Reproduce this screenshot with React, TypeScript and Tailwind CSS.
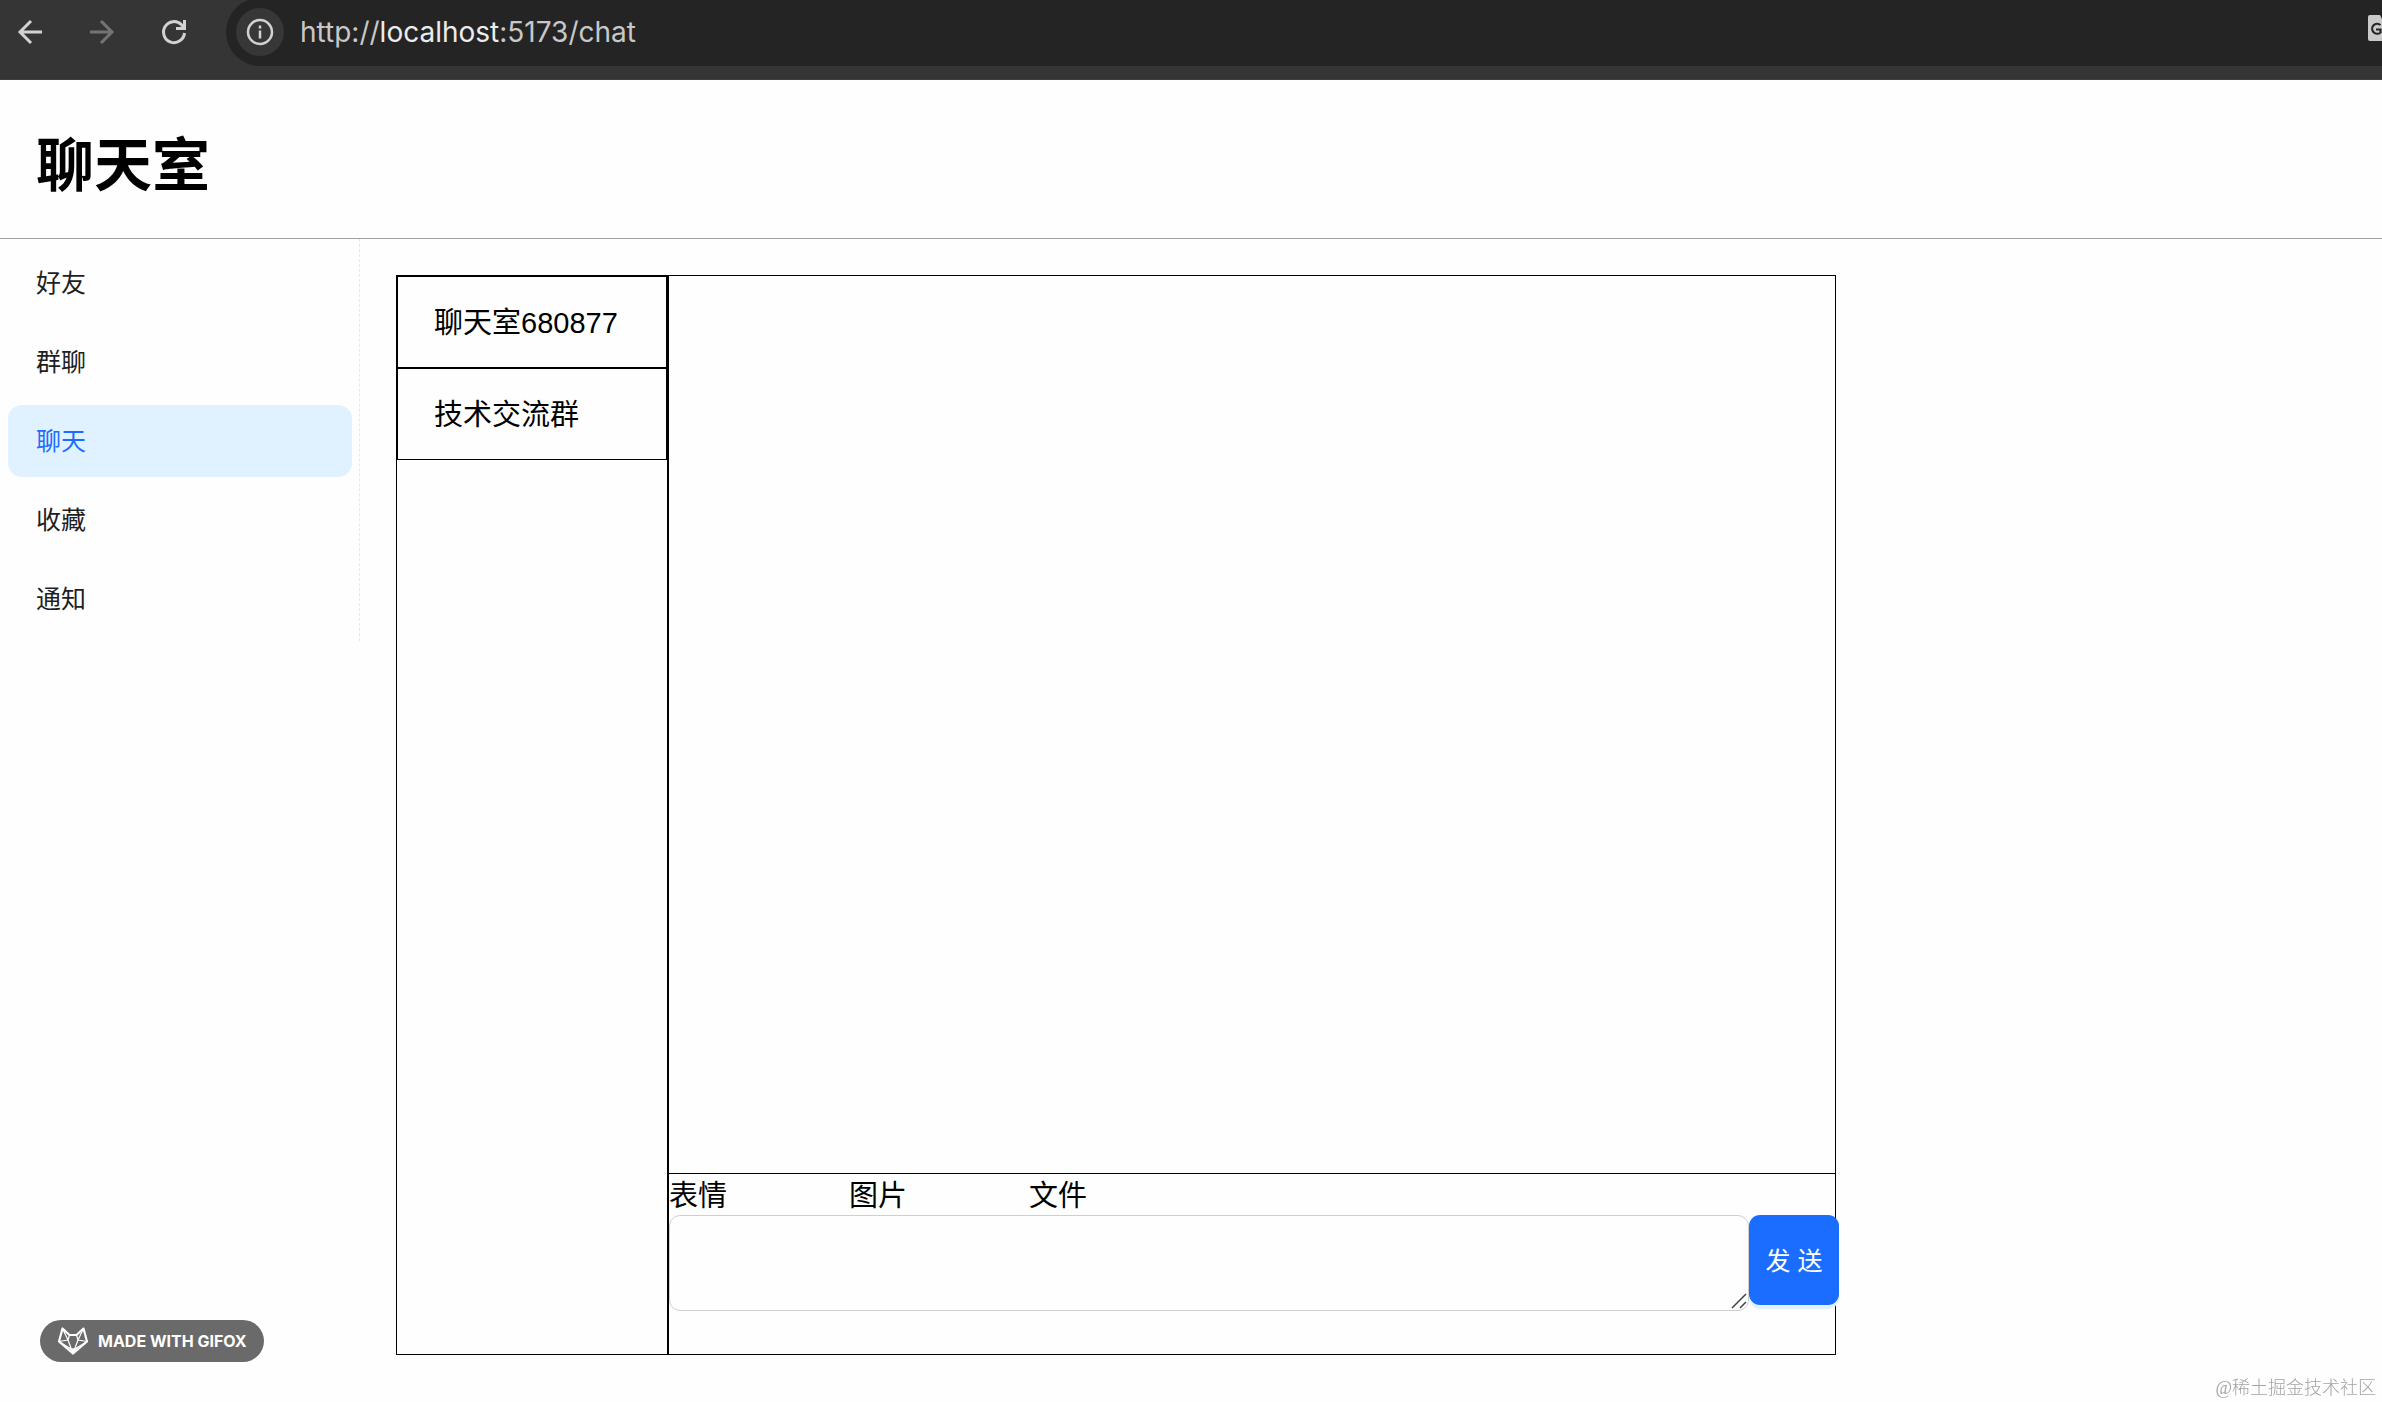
import React from "react";

const navItems = ["好友", "群聊", "聊天", "收藏", "通知"];
const rooms = ["聊天室680877", "技术交流群"];
const tools = ["表情", "图片", "文件"];

function BrowserBar() {
  return (
    <div className="flex h-20 items-start overflow-hidden border-b border-[#3f3f3f] bg-[#353535] text-[#d2d2d2]">
      <div className="flex h-16 w-[226px] shrink-0 items-center pl-4">
        <button aria-label="Back" className="w-7">
          <svg viewBox="0 0 28 28" className="size-7" fill="none" stroke="currentColor" strokeWidth="3">
            <path d="M26 14H4M15 3 4 14l11 11" />
          </svg>
        </button>
        <button aria-label="Forward" className="ml-11 w-7 text-[#747474]">
          <svg viewBox="0 0 28 28" className="size-7" fill="none" stroke="currentColor" strokeWidth="3">
            <path d="M2 14h22M13 3l11 11-11 11" />
          </svg>
        </button>
        <button aria-label="Reload" className="ml-11 w-7">
          <svg viewBox="0 0 28 28" className="size-7" fill="none" stroke="currentColor" strokeWidth="3">
            <path d="M24.500 15A10.500 10.500 0 1 1 21.500 6.700L24 9.500M24.500 2v8.500H16" />
          </svg>
        </button>
      </div>
      <div className="-mt-0.5 flex h-[68px] min-w-0 flex-1 items-center rounded-l-full bg-[#242424] pl-2.5">
        <button aria-label="Site information" className="flex size-12 shrink-0 items-center justify-center rounded-full bg-[#373737]">
          <svg viewBox="0 0 28 28" className="size-7" fill="none" stroke="currentColor" strokeWidth="2.500">
            <circle cx="14" cy="14" r="12" />
            <path d="M14 12.500v8M14 7.500v3" />
          </svg>
        </button>
        <div className="ml-4 min-w-0 flex-1 whitespace-nowrap font-['Inter',sans-serif] text-[28px] leading-10 text-[#c8c8c8]">
          http://<span className="text-[#ececec]">localhost</span>:5173/chat
        </div>
        <svg viewBox="0 0 14 28" className="mb-2 h-7 w-3.5 shrink-0" aria-hidden="true">
          <path d="M2 1h10l2 4v22H2q-2 0-2-2V3q0-2 2-2z" fill="#cacaca" />
          <path d="M12.500 11a5 5 0 1 0 0 7.500V15.500H8" fill="none" stroke="#242424" strokeWidth="2.200" />
        </svg>
      </div>
    </div>
  );
}

function Sidebar() {
  return (
    <nav className="flex w-[360px] shrink-0 flex-col gap-[7px] self-start border-r border-dashed border-[#dcebfa] pt-2 pr-[7px] pb-1.5 pl-2 text-[25px]">
      {navItems.map((item) => (
        <a
          key={item}
          href="#"
          aria-current={item === "聊天" ? "page" : undefined}
          className={
            item === "聊天"
              ? "flex h-[72px] items-center rounded-[14px] bg-[#e0f1ff] px-7 pt-0.5 text-[#1a6dff]"
              : "flex h-[72px] items-center rounded-[14px] px-7 pt-0.5 text-[#1f1f1f]"
          }
        >
          {item}
        </a>
      ))}
    </nav>
  );
}

function ChatPanel() {
  return (
    <div className="flex h-[1080px] w-[1440px] max-w-full border border-black text-[29px] leading-10 text-black">
      <div className="w-[271px] shrink-0 border-r border-black">
        {rooms.map((room) => (
          <button key={room} className="flex h-[92px] w-full items-center border border-black pt-0.5 pl-9 text-left">
            {room}
          </button>
        ))}
      </div>
      <div className="flex min-w-0 flex-1 flex-col border-l border-black">
        <div className="flex-1" />
        <div className="h-[181px] border-t border-black">
          <div className="flex h-[41px]">
            {tools.map((tool) => (
              <button key={tool} className="w-[180px] pt-0.5 text-left">
                {tool}
              </button>
            ))}
          </div>
          <div className="-mr-1 flex items-start">
            <div className="relative flex min-w-0 flex-1">
              <textarea
                aria-label="消息"
                className="h-24 w-full resize-none rounded-[11px] border border-[#cfcfcf] px-5 py-2 text-[25px] outline-none"
              />
              <svg viewBox="0 0 16 16" className="absolute right-0.5 bottom-0.5 size-4" fill="none" stroke="#404040" strokeWidth="1.500" aria-hidden="true">
                <path d="M1 15 15 1M9 15l6-6" />
              </svg>
            </div>
            <button className="size-[90px] shrink-0 rounded-[11px] bg-[#1a6dff] pt-0.5 text-[25px] text-white shadow-[0_4px_0_#e3f2ff]">
              发 送
            </button>
          </div>
        </div>
      </div>
    </div>
  );
}

function GifoxBadge() {
  return (
    <div className="fixed bottom-10 left-10 flex h-[42px] w-56 items-center rounded-full bg-[#6a6a6a] pl-4 text-white">
      <svg viewBox="0 0 34 30" className="h-[30px] w-[34px] shrink-0" fill="none" stroke="currentColor" strokeLinejoin="round" aria-hidden="true">
        <path d="M6.500 2.500 3 15.500l14 12 14-12-3.500-13L20.500 9h-7z" strokeWidth="2.200" />
        <path d="M6.500 2.500 12 14l-9 1.500M13.500 9 12 14l3 8M3 15.500 15 23M27.500 2.500 22 14l9 1.500M20.500 9 22 14l-3 8M31 15.500 19 23M12 14l1.500-5M22 14l-1.500-5" strokeWidth="1.200" />
        <path d="m13.500 22 3.500 1 3.500-1-3.500 5.500z" fill="currentColor" />
      </svg>
      <span className="ml-2 whitespace-nowrap font-['Inter',sans-serif] text-[16px] font-bold">MADE WITH GIFOX</span>
    </div>
  );
}

export default function App() {
  return (
    <div className="min-h-screen bg-[#fefefe] font-['Liberation_Sans','Noto_Sans_CJK_SC',sans-serif]">
      <BrowserBar />
      <header className="flex h-[159px] items-center border-b border-[#a0a0a0] px-9 pt-3">
        <h1 className="text-[58px] font-bold text-black">聊天室</h1>
      </header>
      <div className="flex">
        <Sidebar />
        <main className="min-w-0 flex-1 p-9">
          <ChatPanel />
        </main>
      </div>
      <GifoxBadge />
      <div className="fixed right-1.5 bottom-0 font-['Liberation_Serif','Noto_Sans_CJK_SC',serif] text-[18px] font-light text-[#a3a3a3]">
        @稀土掘金技术社区
      </div>
    </div>
  );
}
